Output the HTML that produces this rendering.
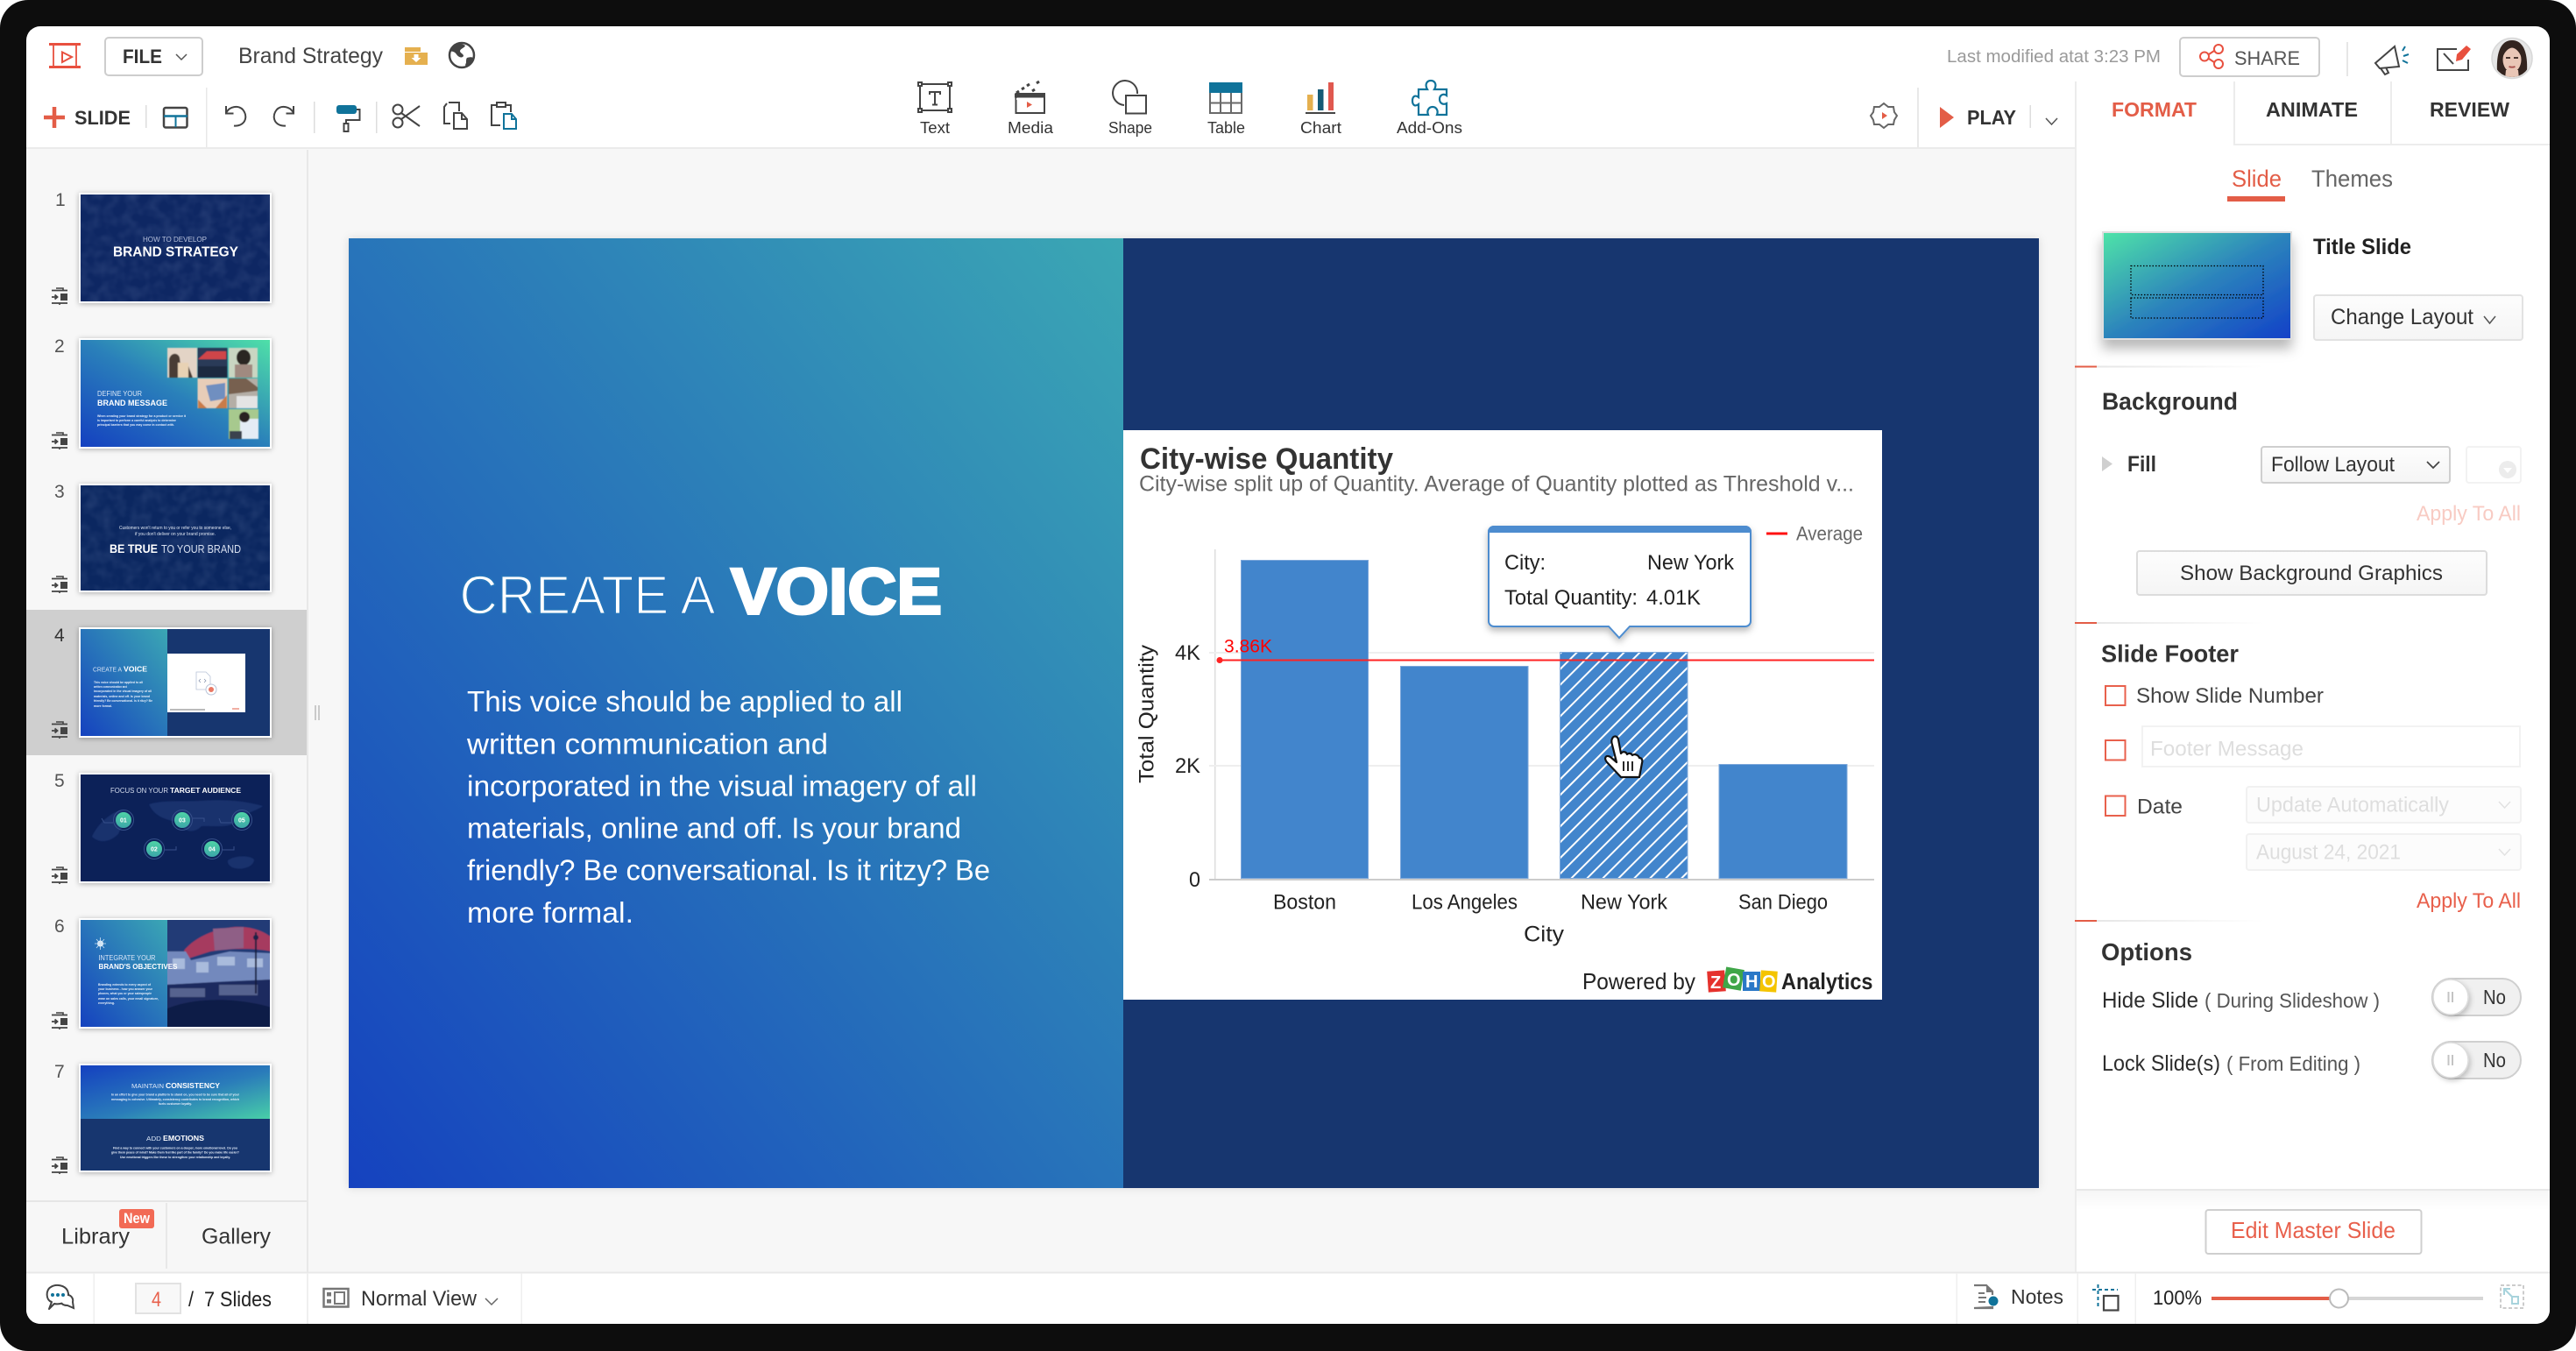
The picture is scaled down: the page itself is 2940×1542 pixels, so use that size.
<!DOCTYPE html>
<html lang="en">
<head>
<meta charset="utf-8">
<title>Brand Strategy</title>
<style>
html,body{margin:0;padding:0;background:#fff;width:2940px;height:1542px;overflow:hidden}
svg{display:block}
text{font-family:"Liberation Sans",Arial,sans-serif;fill:#333}
.b{font-weight:700}
</style>
</head>
<body>
<svg xmlns="http://www.w3.org/2000/svg" width="2940" height="1542" viewBox="0 0 2940 1542">
<defs>
<clipPath id="app"><rect x="30" y="30" width="2880" height="1481" rx="16"/></clipPath>
<linearGradient id="gMain" x1="0" y1="1" x2="1" y2="0"><stop offset="0" stop-color="#1542bf"/><stop offset="1" stop-color="#3ba7b4"/></linearGradient>
<linearGradient id="gGreen" x1="0" y1="1" x2="1" y2="0"><stop offset="0" stop-color="#1440c0"/><stop offset=".5" stop-color="#2a80ba"/><stop offset="1" stop-color="#4fe0a8"/></linearGradient>
<linearGradient id="gLayout" x1="0" y1="0" x2="1" y2="1"><stop offset="0" stop-color="#4fe4a8"/><stop offset=".5" stop-color="#2c84bc"/><stop offset="1" stop-color="#1240c8"/></linearGradient>
<linearGradient id="gTop7" x1="0" y1="0" x2="1" y2="1"><stop offset="0" stop-color="#1440c0"/><stop offset=".55" stop-color="#2a7cba"/><stop offset="1" stop-color="#48cfa8"/></linearGradient>
<linearGradient id="gCircle" x1="0" y1="0" x2="0" y2="1"><stop offset="0" stop-color="#4fd3a6"/><stop offset="1" stop-color="#3ca6a8"/></linearGradient>
<linearGradient id="gFade"><stop offset="0" stop-color="#e6e6e6"/><stop offset="1" stop-color="#fff"/></linearGradient>
<linearGradient id="gBtn" x1="0" y1="0" x2="0" y2="1"><stop offset="0" stop-color="#fdfdfd"/><stop offset="1" stop-color="#f5f5f5"/></linearGradient>
<linearGradient id="gPanelB" x1="0" y1="0" x2="0" y2="1"><stop offset="0" stop-color="#f6f6f6"/><stop offset="1" stop-color="#fff"/></linearGradient>
<pattern id="hatch" patternUnits="userSpaceOnUse" width="12.700" height="12.700" patternTransform="translate(1781 744) rotate(45)">
<rect width="12.700" height="12.700" fill="#4285cc"/><rect x="0" y="0" width="2" height="12.700" fill="#fff"/>
</pattern>
<filter id="sSoft" x="-10%" y="-10%" width="120%" height="120%"><feDropShadow dx="0" dy="0" stdDeviation="5" flood-color="#000" flood-opacity=".12"/></filter>
<filter id="sThumb" x="-10%" y="-10%" width="120%" height="120%"><feDropShadow dx="0" dy="1" stdDeviation="3" flood-color="#000" flood-opacity=".3"/></filter>
<filter id="sLayout" x="-15%" y="-15%" width="130%" height="140%"><feDropShadow dx="0" dy="10" stdDeviation="7" flood-color="#000" flood-opacity=".28"/></filter>
<filter id="sTip" x="-10%" y="-10%" width="120%" height="130%"><feDropShadow dx="0" dy="4" stdDeviation="4" flood-color="#000" flood-opacity=".28"/></filter>
<filter id="sKnob" x="-30%" y="-30%" width="160%" height="170%"><feDropShadow dx="2" dy="3" stdDeviation="3" flood-color="#000" flood-opacity=".2"/></filter>
<filter id="tex" x="0" y="0" width="100%" height="100%"><feTurbulence type="fractalNoise" baseFrequency=".07" numOctaves="2" seed="4"/><feColorMatrix values="0 0 0 0 .5  0 0 0 0 .6  0 0 0 0 .85  0 0 0 .22 -.08"/></filter>
<filter id="bl" x="-2%" y="-2%" width="104%" height="104%"><feGaussianBlur stdDeviation=".5"/></filter>
<g id="trans" fill="none" stroke="#444" stroke-width="1.8">
<path d="M1 2.500H19M1 17H19" stroke-width="1.8"/>
<path d="M6 0h8v2.500M10 17v2" stroke-width="1.6"/>
<path d="M1 10H7M4.500 7.500L7.500 10L4.500 12.500" stroke-width="1.8"/>
<rect x="11" y="6" width="8" height="8" fill="#444" stroke="none"/>
</g>
<g id="sw"><rect width="101" height="42" rx="21" fill="#f0f0f0" stroke="#cfcfcf" stroke-width="2"/><circle cx="21" cy="21" r="20" fill="#fff" stroke="#dcdcdc" stroke-width="1.500" filter="url(#sKnob)"/><path d="M18.500 15v12M23 15v12" stroke="#c4c4c4" stroke-width="2"/></g>
</defs>

<rect width="2940" height="1542" rx="32" fill="#0d0d0d"/>
<g clip-path="url(#app)">
<rect x="30" y="30" width="2880" height="1481" fill="#fff"/>

<!-- canvas and sidebar -->
<rect x="30" y="170" width="2340" height="1283" fill="#f7f7f7"/>
<rect x="30" y="696" width="320" height="166" fill="#cfcfcf"/>
<rect x="350" y="171" width="2" height="1282" fill="#e8e8e8"/>
<rect x="30" y="168" width="2340" height="2" fill="#ebebeb"/>
<rect x="30" y="1370" width="320" height="2" fill="#e6e6e6"/>
<rect x="189" y="1373" width="2" height="75" fill="#e8e8e8"/>
<path d="M360 805v17M364 805v17" stroke="#bbb" stroke-width="1.500"/>

<!-- header row 1 -->
<g fill="none" stroke="#e8503f">
<path d="M56 50.500H92M56 76.500H92" stroke-width="3"/>
<path d="M61 52V75M87 52V75" stroke-width="1.800"/>
<path d="M71 59.500L82 65L71 71Z" stroke-width="2"/>
</g>
<rect x="120" y="43" width="111" height="43" rx="4" fill="#fff" stroke="#cdcdcd" stroke-width="2"/>
<text x="140" y="72" font-size="22" class="b" textLength="45" lengthAdjust="spacingAndGlyphs">FILE</text>
<path d="M201 62l6 6l6-6" fill="none" stroke="#555" stroke-width="1.500"/>
<text x="272" y="72" font-size="25" style="fill:#444" textLength="165" lengthAdjust="spacingAndGlyphs">Brand Strategy</text>
<path d="M462 54h18v5h-18zM462 60h26v14h-26z" fill="#e5b04f"/>
<path d="M472.500 62h5v4h3l-5.500 5l-5.500-5h3z" fill="#fff"/>
<circle cx="527" cy="63" r="14" fill="#fff" stroke="#444" stroke-width="2.500"/>
<path d="M520 50c4-1 8 0 11 2c-1 3-5 3-6 6c0 3 4 3 4 6c-2 3-6 1-8-2c-2-3-5-4-8-3c1-4 3-7 7-9zM533 66c3-1 6-1 7 0c-1 4-4 8-8 10c-2-2 0-3 0-5c0-2 0-4 1-5z" fill="#444"/>

<text x="2222" y="71" font-size="20.500" style="fill:#9a9a9a" textLength="244" lengthAdjust="spacingAndGlyphs">Last modified atat 3:23 PM</text>
<rect x="2488" y="43" width="159" height="44" rx="4" fill="#fff" stroke="#cdcdcd" stroke-width="2"/>
<g fill="none" stroke="#e8503f" stroke-width="2"><circle cx="2516" cy="64.500" r="5"/><circle cx="2532" cy="56" r="5"/><circle cx="2532" cy="73" r="5"/><path d="M2521 62l6-4M2521 67l6 4"/></g>
<text x="2550" y="74" font-size="22" style="fill:#555" textLength="75" lengthAdjust="spacingAndGlyphs">SHARE</text>
<rect x="2678" y="48" width="2" height="39" fill="#e6e6e6"/>
<g fill="none" stroke="#444" stroke-width="2"><path d="M2733 53L2711 72L2716 78L2738 76Z"/><path d="M2717 78l5 7l4-2l-3-6"/></g>
<path d="M2742 58l3-5M2743 64l6-2M2742 69l6 3" stroke="#10739a" stroke-width="2" fill="none"/>
<path d="M2804 56H2782V80H2817V68" fill="none" stroke="#444" stroke-width="2"/>
<path d="M2789 61L2800 73" stroke="#444" stroke-width="2"/>
<path d="M2803 70L2804 62L2815 52L2820 56L2810 68Z" fill="#e8503f"/>
<circle cx="2867" cy="66.500" r="23" fill="#e6e6e6" stroke="#d8d8d8" stroke-width="1.500"/>
<clipPath id="av"><circle cx="2867" cy="66.500" r="21.500"/></clipPath>
<g clip-path="url(#av)">
<path d="M2851 92C2848 70 2850 46 2867 46C2884 46 2886 70 2883 92Z" fill="#33241f"/>
<ellipse cx="2867" cy="68" rx="10.500" ry="14.500" fill="#e9c6b6"/>
<path d="M2856 66C2857 54 2863 51 2867 53C2871 51 2877 54 2878 66C2875 58 2871 55 2867 54.500C2863 55 2859 58 2856 66Z" fill="#33241f"/>
<path d="M2860 66h5M2869 66h5" stroke="#33221c" stroke-width="1.800"/>
<path d="M2863.500 76c2.500 1 4.500 1 7 0" stroke="#a8504c" stroke-width="1.800" fill="none"/>
<path d="M2860 80l14 0l1 10h-16z" fill="#e9c6b6"/>
</g>

<!-- row 2 left -->
<path d="M50 134H74M62 122V146" stroke="#e35d47" stroke-width="4.500" fill="none"/>
<text x="85" y="142" font-size="22" class="b" textLength="64" lengthAdjust="spacingAndGlyphs">SLIDE</text>
<rect x="166" y="120" width="1.500" height="26" fill="#ddd"/>
<rect x="187" y="123" width="26.500" height="22.500" rx="2" fill="none" stroke="#444" stroke-width="2.500"/>
<path d="M187 132.500H214" stroke="#10739a" stroke-width="2.500"/><path d="M200.500 133V145" stroke="#10739a" stroke-width="2"/>
<rect x="235" y="100" width="1.500" height="68" fill="#e8e8e8"/>
<g fill="none" stroke="#444" stroke-width="2">
<path d="M258 121v8.500h8.500"/><path d="M258 129C262 121 272 120 277 125C282 131 281 138 276 141.500C274 143 270 144 267 143.500"/>
<path d="M335 121v8.500h-8.500"/><path d="M335 129C331 121 321 120 316 125C311 131 312 138 317 141.500C319 143 323 144 326 143.500"/>
</g>
<rect x="358" y="116" width="1.500" height="36" fill="#ddd"/>
<rect x="384" y="120" width="23" height="10" rx="3" fill="#10739a"/>
<path d="M407 125H410.500V137H395V141" fill="none" stroke="#444" stroke-width="2"/><rect x="392.500" y="141" width="5" height="9" fill="#fff" stroke="#444" stroke-width="2"/>
<rect x="429" y="116" width="1.500" height="36" fill="#ddd"/>
<g fill="none" stroke="#444" stroke-width="2"><circle cx="454" cy="125" r="5.500"/><circle cx="454" cy="140" r="5.500"/><path d="M458 129L479 144M458 136L479 121"/></g>
<g fill="none" stroke="#444" stroke-width="2"><path d="M512 117h12v10M510 118l-3 4v19h7"/><path d="M518 129h9l6 7v11h-15z" fill="#fff"/><path d="M527 129v7h6"/></g>
<g fill="none" stroke="#444" stroke-width="2"><path d="M571 143h-10v-23h6M577 120h6v8"/><rect x="567" y="117" width="10" height="5"/></g>
<path d="M575 130h9l5 6v11h-14zM584 130v6h5" fill="#fff" stroke="#10739a" stroke-width="2"/>

<!-- insert icons -->
<g fill="none" stroke="#444" stroke-width="2">
<rect x="1050" y="96" width="34" height="30"/>
<rect x="1048" y="94" width="4" height="4" fill="#fff"/><rect x="1082" y="94" width="4" height="4" fill="#fff"/><rect x="1048" y="124" width="4" height="4" fill="#fff"/><rect x="1082" y="124" width="4" height="4" fill="#fff"/>
<path d="M1061 108v-3h12v3M1067 105v14M1064 119.500h6"/>
<rect x="1159.500" y="107" width="32.500" height="22"/>
<path d="M1298 107A14 14 0 1 0 1283 120"/>
<rect x="1285" y="109" width="23" height="20.500"/>
</g>
<path d="M1158 107h35v4.500h-35z" fill="#444"/>
<path d="M1160 106l3-2M1166 102l3-2M1172 98l3-2M1178 104l3-2M1183 95l3-2" stroke="#444" stroke-width="3" fill="none"/>
<path d="M1160 113h3M1166 113h3M1172 113h3M1178 113h3M1184 113h3" stroke="#fff" stroke-width="2"/>
<path d="M1172 116l6 3.500l-6 3.500z" fill="#e35d47"/>
<rect x="1380" y="94" width="38" height="12" fill="#10739a"/>
<path d="M1381 106V129H1417V106M1393 106V129M1405 106V129M1381 117.500H1417" fill="none" stroke="#6a6a6a" stroke-width="2"/>
<rect x="1492" y="108" width="6.500" height="18" fill="#e5b04f"/><rect x="1504" y="102" width="6.500" height="24" fill="#155a75"/><rect x="1516" y="94" width="6" height="32" fill="#e0584f"/><rect x="1490" y="128" width="34" height="2" fill="#444"/>
<path d="M1619 131V119C1615 122 1612 120 1612 115C1612 110 1615 108 1619 111V102H1629C1626 97 1628 92 1633 92C1638 92 1640 97 1637 102H1651V109C1647 106 1643 109 1643 113C1643 118 1647 120 1651 118V131H1640C1642 126 1639 122 1635 122C1631 122 1628 126 1630 131Z" fill="none" stroke="#10739a" stroke-width="2.200"/>
<g font-size="18.500">
<text x="1050" y="152" textLength="34" lengthAdjust="spacingAndGlyphs">Text</text>
<text x="1150" y="152" textLength="52" lengthAdjust="spacingAndGlyphs">Media</text>
<text x="1265" y="152" textLength="50" lengthAdjust="spacingAndGlyphs">Shape</text>
<text x="1378" y="152" textLength="43" lengthAdjust="spacingAndGlyphs">Table</text>
<text x="1484" y="152" textLength="47" lengthAdjust="spacingAndGlyphs">Chart</text>
<text x="1594" y="152" textLength="75" lengthAdjust="spacingAndGlyphs">Add-Ons</text>
</g>

<!-- play area -->
<path d="M2150 118l5 4h6l1 6l3 4l-3 5l-1 5h-6l-5 4l-5-4h-6l-1-5l-3-5l3-4l1-6h6z" fill="none" stroke="#666" stroke-width="2"/>
<path d="M2148 128l6 4l-6 4z" fill="#e35d47"/>
<rect x="2188" y="100" width="2" height="68" fill="#e8e8e8"/>
<path d="M2214 122L2230 134L2214 146Z" fill="#e35d47"/>
<text x="2245" y="142" font-size="23" class="b" textLength="56" lengthAdjust="spacingAndGlyphs">PLAY</text>
<rect x="2316.500" y="120" width="1.500" height="26" fill="#ddd"/>
<path d="M2335 135l6.500 7l6.500-7" fill="none" stroke="#555" stroke-width="1.500"/>

<!-- right panel -->
<rect x="2368" y="93" width="2" height="1360" fill="#ececec"/>
<rect x="2549" y="93" width="2" height="72" fill="#ececec"/>
<rect x="2728" y="93" width="2" height="72" fill="#ececec"/>
<rect x="2549" y="164" width="361" height="2" fill="#ececec"/>
<rect x="2370" y="166" width="540" height="1287" fill="#fff"/>
<rect x="2370" y="93" width="179" height="80" fill="#fff"/>
<g font-size="23" class="b">
<text x="2410" y="133" style="fill:#e35d47" textLength="97" lengthAdjust="spacingAndGlyphs">FORMAT</text>
<text x="2586" y="133" textLength="105" lengthAdjust="spacingAndGlyphs">ANIMATE</text>
<text x="2773" y="133" textLength="91" lengthAdjust="spacingAndGlyphs">REVIEW</text>
</g>
<text x="2547" y="213" font-size="27" style="fill:#e35d47" textLength="57" lengthAdjust="spacingAndGlyphs">Slide</text>
<rect x="2542" y="224" width="66" height="6" fill="#e35d47"/>
<text x="2638" y="213" font-size="27" style="fill:#666" textLength="93" lengthAdjust="spacingAndGlyphs">Themes</text>
<rect x="2400" y="265" width="215" height="122" fill="url(#gLayout)" stroke="#dfdfdf" stroke-width="2" filter="url(#sLayout)"/>
<g fill="none" stroke="#000" stroke-width="1.300" stroke-dasharray="1.500 2"><rect x="2432" y="303.500" width="151" height="33"/><rect x="2432" y="340" width="151" height="23"/></g>
<text x="2640" y="290" font-size="25" class="b" style="fill:#222" textLength="112" lengthAdjust="spacingAndGlyphs">Title Slide</text>
<rect x="2641" y="337" width="238" height="51" rx="3" fill="url(#gBtn)" stroke="#e2e2e2" stroke-width="2"/>
<text x="2660" y="370" font-size="25" textLength="163" lengthAdjust="spacingAndGlyphs">Change Layout</text>
<path d="M2835 361l6.500 8l6.500-8" fill="none" stroke="#555" stroke-width="1.500"/>

<g>
<rect x="2393" y="417.500" width="190" height="2" fill="url(#gFade)"/><rect x="2368" y="417.500" width="25" height="2" fill="#e35d47"/>
<rect x="2393" y="710" width="190" height="2" fill="url(#gFade)"/><rect x="2368" y="710" width="25" height="2" fill="#e35d47"/>
<rect x="2393" y="1050" width="190" height="2" fill="url(#gFade)"/><rect x="2368" y="1050" width="25" height="2" fill="#e35d47"/>
</g>

<text x="2399" y="467.500" font-size="28" class="b" textLength="155" lengthAdjust="spacingAndGlyphs">Background</text>
<path d="M2399 521L2411 529.500L2399 538Z" fill="#cfcfcf"/>
<text x="2428" y="538" font-size="25" class="b" textLength="33" lengthAdjust="spacingAndGlyphs">Fill</text>
<rect x="2581" y="510" width="215" height="41" rx="3" fill="url(#gBtn)" stroke="#cfcfcf" stroke-width="2"/>
<text x="2592" y="538" font-size="24" textLength="141" lengthAdjust="spacingAndGlyphs">Follow Layout</text>
<path d="M2770 527l7 7l7-7" fill="none" stroke="#444" stroke-width="1.700"/>
<rect x="2815" y="510" width="62" height="41" rx="3" fill="#fff" stroke="#f2f2f2" stroke-width="2"/>
<circle cx="2862" cy="536" r="10" fill="#ececec"/><path d="M2857 534h10l-5 6z" fill="#fff"/>
<text x="2758" y="594" font-size="24" style="fill:#f8cbc3" textLength="119" lengthAdjust="spacingAndGlyphs">Apply To All</text>
<rect x="2439" y="629" width="399" height="50" rx="3" fill="url(#gBtn)" stroke="#dcdcdc" stroke-width="2"/>
<text x="2488" y="662" font-size="24.500" textLength="300" lengthAdjust="spacingAndGlyphs">Show Background Graphics</text>

<text x="2398" y="755.500" font-size="28" class="b" textLength="157" lengthAdjust="spacingAndGlyphs">Slide Footer</text>
<g fill="#fff" stroke="#e8604c" stroke-width="2"><rect x="2403" y="783" width="22.500" height="22"/><rect x="2403" y="845" width="22.500" height="22.500"/><rect x="2403" y="908.500" width="22.500" height="22.500"/></g>
<text x="2438" y="802" font-size="24.500" style="fill:#444" textLength="214" lengthAdjust="spacingAndGlyphs">Show Slide Number</text>
<rect x="2445" y="829" width="431" height="46" fill="#fff" stroke="#f2f2f2" stroke-width="2"/>
<text x="2454" y="862.500" font-size="24.500" style="fill:#dedede" textLength="175" lengthAdjust="spacingAndGlyphs">Footer Message</text>
<text x="2439" y="928.500" font-size="24.500" style="fill:#444" textLength="52" lengthAdjust="spacingAndGlyphs">Date</text>
<rect x="2564" y="898" width="313" height="41" rx="3" fill="#fcfcfc" stroke="#f1f1f1" stroke-width="2"/>
<text x="2575" y="926.500" font-size="24" style="fill:#dedede" textLength="220" lengthAdjust="spacingAndGlyphs">Update Automatically</text>
<path d="M2852 915l6.500 7l6.500-7" fill="none" stroke="#e2e2e2" stroke-width="1.500"/>
<rect x="2564" y="952" width="313" height="41" rx="3" fill="#fcfcfc" stroke="#f1f1f1" stroke-width="2"/>
<text x="2575" y="980.500" font-size="24" style="fill:#dedede" textLength="165" lengthAdjust="spacingAndGlyphs">August 24, 2021</text>
<path d="M2852 969l6.500 7l6.500-7" fill="none" stroke="#e2e2e2" stroke-width="1.500"/>
<text x="2758" y="1036" font-size="24" style="fill:#e8604c" textLength="119" lengthAdjust="spacingAndGlyphs">Apply To All</text>

<text x="2398" y="1096" font-size="28" class="b" textLength="104" lengthAdjust="spacingAndGlyphs">Options</text>
<text x="2399" y="1150" font-size="25" style="fill:#2d2d2d" textLength="110" lengthAdjust="spacingAndGlyphs">Hide Slide</text>
<text x="2516" y="1150" font-size="23" style="fill:#555" textLength="200" lengthAdjust="spacingAndGlyphs">( During Slideshow )</text>
<use href="#sw" x="2776" y="1117"/>
<text x="2834" y="1146" font-size="23" textLength="26" lengthAdjust="spacingAndGlyphs">No</text>
<text x="2399" y="1222" font-size="25" style="fill:#2d2d2d" textLength="135" lengthAdjust="spacingAndGlyphs">Lock Slide(s)</text>
<text x="2541" y="1222" font-size="23" style="fill:#555" textLength="153" lengthAdjust="spacingAndGlyphs">( From Editing )</text>
<use href="#sw" x="2776" y="1189"/>
<text x="2834" y="1218" font-size="23" textLength="26" lengthAdjust="spacingAndGlyphs">No</text>

<rect x="2370" y="1357" width="540" height="2" fill="#e8e8e8"/>
<rect x="2370" y="1359" width="540" height="22" fill="url(#gPanelB)"/>
<rect x="2517.500" y="1381" width="246" height="50" rx="3" fill="#fff" stroke="#cfcfcf" stroke-width="2"/>
<text x="2546" y="1413" font-size="26" style="fill:#e8604c" textLength="188" lengthAdjust="spacingAndGlyphs">Edit Master Slide</text>

<!-- status bar -->
<rect x="30" y="1453" width="2880" height="60" fill="#fff"/>
<rect x="30" y="1451.500" width="2880" height="2" fill="#e8e8e8"/>
<g fill="#efefef"><rect x="106.500" y="1453" width="1.500" height="58"/><rect x="350" y="1453" width="2" height="58"/><rect x="594.500" y="1453" width="1.500" height="58"/><rect x="2232.500" y="1453" width="1.500" height="58"/><rect x="2370.500" y="1453" width="1.500" height="58"/><rect x="2436.500" y="1453" width="1.500" height="58"/></g>
<path d="M56 1494l3-8C52 1484 52 1472 58 1469C64 1465 74 1467 77 1473C79 1478 78 1482 75 1485C72 1488 66 1489 62 1488Z" fill="#fff" stroke="#444" stroke-width="2" stroke-linejoin="round"/>
<path d="M77 1478C81 1478 84 1482 83 1486L84 1493L77 1490C74 1490 71 1489 70 1487" fill="#fff" stroke="#444" stroke-width="2"/>
<circle cx="60" cy="1478" r="2" fill="#10739a"/><circle cx="66" cy="1478" r="2" fill="#10739a"/><circle cx="72" cy="1478" r="2" fill="#10739a"/>
<rect x="155" y="1465" width="51" height="34" fill="#f8f8f8" stroke="#e2e2e2" stroke-width="2"/>
<text x="173" y="1491" font-size="24" style="fill:#e8604c" textLength="11" lengthAdjust="spacingAndGlyphs">4</text>
<text x="215" y="1491" font-size="24" style="fill:#222" textLength="6" lengthAdjust="spacingAndGlyphs">/</text>
<text x="233" y="1491" font-size="24" style="fill:#222" textLength="77" lengthAdjust="spacingAndGlyphs">7 Slides</text>
<rect x="369.500" y="1471" width="28" height="20.500" fill="#fff" stroke="#777" stroke-width="2.500"/>
<rect x="382" y="1475" width="11" height="13" fill="none" stroke="#777" stroke-width="2"/>
<rect x="373" y="1475" width="5" height="4.500" fill="#777"/><rect x="373" y="1483" width="5" height="4.500" fill="#777"/>
<text x="412" y="1490" font-size="24" textLength="132" lengthAdjust="spacingAndGlyphs">Normal View</text>
<path d="M554 1482l7 7l7-7" fill="none" stroke="#666" stroke-width="1.500"/>
<path d="M2253 1467H2267L2274 1474V1478M2274 1492V1493H2253Z" fill="none" stroke="#777" stroke-width="2.200"/>
<path d="M2267 1467L2275 1475H2267Z" fill="#777"/>
<path d="M2258 1476h7M2258 1481h9M2258 1486h8" stroke="#777" stroke-width="2"/>
<circle cx="2275" cy="1485" r="5.500" fill="#10739a"/>
<text x="2295" y="1488" font-size="23" textLength="60" lengthAdjust="spacingAndGlyphs">Notes</text>
<path d="M2388 1472H2417M2394.500 1466V1492" stroke="#10739a" stroke-width="2" stroke-dasharray="4 3" fill="none"/>
<rect x="2401" y="1479" width="16.500" height="16.500" fill="#fff" stroke="#444" stroke-width="2.200"/>
<text x="2457" y="1489" font-size="23" style="fill:#222" textLength="56" lengthAdjust="spacingAndGlyphs">100%</text>
<rect x="2660" y="1480" width="174" height="4" fill="#d6d6d6"/>
<rect x="2524" y="1480" width="136" height="4" fill="#e35d47"/>
<circle cx="2669.500" cy="1482" r="10.500" fill="#fff" stroke="#bbb" stroke-width="2"/>
<rect x="2854" y="1467" width="26" height="26" fill="#fff" stroke="#ccc" stroke-width="2" stroke-dasharray="4 2.500"/>
<path d="M2858 1471l10 10M2858 1478v-7h7" fill="none" stroke="#a8d3dc" stroke-width="2"/>
<rect x="2867" y="1480" width="7" height="8" fill="#fff" stroke="#a8d3dc" stroke-width="2"/>

<!-- sidebar footer -->
<text x="70" y="1419.500" font-size="25" textLength="78" lengthAdjust="spacingAndGlyphs">Library</text>
<text x="230" y="1419.500" font-size="25" textLength="79" lengthAdjust="spacingAndGlyphs">Gallery</text>
<rect x="136" y="1380" width="40" height="22" rx="3" fill="#f26a55"/>
<text x="141" y="1396" font-size="16.500" class="b" style="fill:#fff" textLength="30" lengthAdjust="spacingAndGlyphs">New</text>

<!-- main slide -->
<rect x="398" y="272" width="1929" height="1084" fill="#17366f" filter="url(#sSoft)"/>
<rect x="398" y="272" width="884" height="1084" fill="url(#gMain)"/>
<rect x="1282" y="272" width="1045" height="1084" fill="#17366f"/>
<text x="524.500" y="700.500" font-size="62" style="fill:#fff;stroke:#2775bb;stroke-width:1.700" textLength="292" lengthAdjust="spacingAndGlyphs">CREATE A</text>
<text x="834" y="700.500" font-size="74" class="b" style="fill:#fff;stroke:#fff;stroke-width:3" textLength="241" lengthAdjust="spacingAndGlyphs">VOICE</text>
<g font-size="33">
<text x="533" y="812" style="fill:#fff" textLength="497" lengthAdjust="spacingAndGlyphs">This voice should be applied to all</text>
<text x="533" y="860.500" style="fill:#fff" textLength="412" lengthAdjust="spacingAndGlyphs">written communication and</text>
<text x="533" y="908.500" style="fill:#fff" textLength="582" lengthAdjust="spacingAndGlyphs">incorporated in the visual imagery of all</text>
<text x="533" y="956.500" style="fill:#fff" textLength="564" lengthAdjust="spacingAndGlyphs">materials, online and off. Is your brand</text>
<text x="533" y="1004.500" style="fill:#fff" textLength="597" lengthAdjust="spacingAndGlyphs">friendly? Be conversational. Is it ritzy? Be</text>
<text x="533" y="1053" style="fill:#fff" textLength="190" lengthAdjust="spacingAndGlyphs">more formal.</text>
</g>

<!-- chart -->
<rect x="1282" y="491" width="866" height="650" fill="#fff"/>
<text x="1301" y="535" font-size="34" class="b" textLength="289" lengthAdjust="spacingAndGlyphs">City-wise Quantity</text>
<text x="1300" y="560.500" font-size="25" style="fill:#666" textLength="816" lengthAdjust="spacingAndGlyphs">City-wise split up of Quantity. Average of Quantity plotted as Threshold v...</text>
<rect x="1386" y="627" width="1.500" height="377" fill="#ddd"/>
<path d="M1380 745H2139M1380 874H2139" stroke="#eee" stroke-width="2"/>
<rect x="1380" y="1003" width="759" height="2" fill="#ccc"/>
<g stroke="#7ba6da" stroke-width="1">
<rect x="1416.500" y="639.500" width="145" height="363" fill="#4285cc"/>
<rect x="1598.500" y="760.500" width="145.500" height="242" fill="#4285cc"/>
<rect x="1780.500" y="744.500" width="145.500" height="258" fill="url(#hatch)"/>
<rect x="1962" y="872.500" width="146" height="130" fill="#4285cc"/>
</g>
<rect x="1392" y="752.500" width="747" height="2" fill="#f22"/>
<circle cx="1392" cy="753.500" r="3.500" fill="#f22"/>
<text x="1397" y="744.500" font-size="21" style="fill:#f00" textLength="55" lengthAdjust="spacingAndGlyphs">3.86K</text>
<g font-size="24">
<text x="1341" y="753" style="fill:#222" textLength="29" lengthAdjust="spacingAndGlyphs">4K</text>
<text x="1341" y="882" style="fill:#222" textLength="29" lengthAdjust="spacingAndGlyphs">2K</text>
<text x="1357" y="1012" style="fill:#222" textLength="13" lengthAdjust="spacingAndGlyphs">0</text>
<text x="1453" y="1037.500" style="fill:#222" textLength="72" lengthAdjust="spacingAndGlyphs">Boston</text>
<text x="1611" y="1037.500" style="fill:#222" textLength="121" lengthAdjust="spacingAndGlyphs">Los Angeles</text>
<text x="1804" y="1037.500" style="fill:#222" textLength="99" lengthAdjust="spacingAndGlyphs">New York</text>
<text x="1984" y="1037.500" style="fill:#222" textLength="102" lengthAdjust="spacingAndGlyphs">San Diego</text>
</g>
<text x="1739" y="1074.500" font-size="25" style="fill:#222" textLength="46" lengthAdjust="spacingAndGlyphs">City</text>
<text transform="translate(1316.500,894) rotate(-90)" font-size="24" style="fill:#222" textLength="158" lengthAdjust="spacingAndGlyphs">Total Quantity</text>
<rect x="2016" y="607.500" width="24" height="3" fill="#f11"/>
<text x="2050" y="616.500" font-size="22" style="fill:#666" textLength="76" lengthAdjust="spacingAndGlyphs">Average</text>
<path d="M1705 601H1992a6 6 0 0 1 6 6V709a6 6 0 0 1-6 6H1860L1848 728L1836 715H1705a6 6 0 0 1-6-6V607a6 6 0 0 1 6-6Z" fill="#fff" stroke="#4d8ccf" stroke-width="2" filter="url(#sTip)"/>
<path d="M1698 608V607a7 7 0 0 1 7-7H1992a7 7 0 0 1 7 7V608Z" fill="#4d8ccf"/>
<g font-size="24">
<text x="1717" y="650" style="fill:#222" textLength="47" lengthAdjust="spacingAndGlyphs">City:</text>
<text x="1880" y="650" style="fill:#222" textLength="99" lengthAdjust="spacingAndGlyphs">New York</text>
<text x="1717" y="690" style="fill:#222" textLength="152" lengthAdjust="spacingAndGlyphs">Total Quantity:</text>
<text x="1879" y="690" style="fill:#222" textLength="62" lengthAdjust="spacingAndGlyphs">4.01K</text>
</g>
<path d="M1840 843C1842 839 1846 840 1847 844L1850 860C1852 857 1856 858 1857 861C1859 859 1862 860 1863 862C1866 860 1870 862 1871 865C1874 865 1875 868 1874 871L1871 887H1850L1834 870C1830 865 1833 861 1838 864L1845 870L1840 850C1839 847 1839 845 1840 843Z" fill="#fff" stroke="#111" stroke-width="2.200" stroke-linejoin="round"/>
<path d="M1853 869V880M1858 869V880M1863 869V880" stroke="#111" stroke-width="1.800"/>
<text x="1806" y="1129" font-size="26" style="fill:#222" textLength="129" lengthAdjust="spacingAndGlyphs">Powered by</text>
<g>
<rect x="1949" y="1108" width="20" height="24" fill="#e5322d" transform="rotate(-4 1959 1120)"/>
<rect x="1968" y="1105" width="21" height="24" fill="#3fa648" transform="rotate(10 1978 1117)"/>
<rect x="1989" y="1109" width="20" height="22" fill="#2a78c7"/>
<rect x="2009" y="1108" width="19" height="24" fill="#f4c400" transform="rotate(4 2018 1120)"/>
<g font-size="20" class="b">
<text x="1952" y="1128" style="fill:#fff">Z</text>
<text x="1971" y="1125" style="fill:#fff">O</text>
<text x="1992" y="1127" style="fill:#fff">H</text>
<text x="2011" y="1127" style="fill:#fff">O</text>
</g>
</g>
<text x="2033" y="1129" font-size="26" class="b" style="fill:#222" textLength="104.500" lengthAdjust="spacingAndGlyphs">Analytics</text>

<!-- thumbs -->
<g font-size="21">
<text x="63" y="235" style="fill:#555">1</text>
<text x="62" y="402" style="fill:#555">2</text>
<text x="62" y="568" style="fill:#555">3</text>
<text x="62" y="732" style="fill:#333">4</text>
<text x="62" y="898" style="fill:#555">5</text>
<text x="62" y="1064" style="fill:#555">6</text>
<text x="62" y="1230" style="fill:#555">7</text>
</g>
<use href="#trans" x="58" y="329"/><use href="#trans" x="58" y="494"/><use href="#trans" x="58" y="658"/><use href="#trans" x="58" y="824"/><use href="#trans" x="58" y="990"/><use href="#trans" x="58" y="1156"/><use href="#trans" x="58" y="1321"/>
<g fill="#fff" filter="url(#sThumb)">
<rect x="90" y="220" width="220" height="126"/><rect x="90" y="386" width="220" height="126"/><rect x="90" y="552" width="220" height="124"/><rect x="90" y="716" width="220" height="126"/><rect x="90" y="882" width="220" height="126"/><rect x="90" y="1048" width="220" height="126"/><rect x="90" y="1214" width="220" height="124"/>
</g>

<!-- thumb1 -->
<rect x="92" y="222" width="216" height="122" fill="#0e2763"/>
<rect x="92" y="222" width="216" height="122" filter="url(#tex)"/>
<text x="163" y="276" font-size="8.500" style="fill:#b8c2dc" textLength="73" lengthAdjust="spacingAndGlyphs">HOW TO DEVELOP</text>
<text x="129" y="292.500" font-size="15.500" class="b" style="fill:#fff" textLength="143" lengthAdjust="spacingAndGlyphs">BRAND STRATEGY</text>

<!-- thumb2 -->
<rect x="92" y="388" width="216" height="122" fill="url(#gGreen)"/>
<g filter="url(#bl)">
<rect x="191" y="397" width="34" height="34" fill="#e3d4c6"/><path d="M193 431V410c2-8 10-8 12-2l1 8l9 2l5 13z" fill="#4a3d36"/><rect x="203" y="414" width="12" height="17" fill="#e8d2b4"/>
<rect x="225.500" y="397" width="34" height="34" fill="#2c3b58"/><path d="M226 410l10-9h22v9z" fill="#cf4448"/><rect x="226" y="418" width="33" height="13" fill="#1f2a40"/>
<rect x="261" y="397" width="33" height="34" fill="#c9d6c2"/><ellipse cx="278" cy="408" rx="8" ry="9" fill="#2b2523"/><rect x="268" y="416" width="20" height="15" fill="#a08a80"/>
<rect x="225.500" y="432" width="34" height="34" fill="#e7cdb8"/><path d="M235 440l22-3v18l-17 3z" fill="#6f8fc0"/><path d="M226 456l10 10h-10zM246 466l13-15v15z" fill="#c97b4a"/>
<rect x="261" y="432" width="33" height="34" fill="#b4aea6"/><path d="M261 432h20l13 10v4l-33 4z" fill="#77604f"/><rect x="270" y="452" width="24" height="14" fill="#e4e4e4"/>
<rect x="261" y="467" width="34" height="34" fill="#a7c98e"/><rect x="274" y="478" width="21" height="23" fill="#e4ecf5"/><circle cx="279" cy="476" r="6" fill="#2a2320"/><rect x="262" y="492" width="14" height="9" fill="#3a424e"/>
</g>
<text x="111" y="452" font-size="8.500" style="fill:#dbe7f6" textLength="51" lengthAdjust="spacingAndGlyphs">DEFINE YOUR</text>
<text x="111" y="463" font-size="9.500" class="b" style="fill:#fff" textLength="80" lengthAdjust="spacingAndGlyphs">BRAND MESSAGE</text>
<g font-size="3.800" class="b">
<text x="111" y="476" style="fill:#e4ecfa" textLength="101" lengthAdjust="spacingAndGlyphs">When creating your brand strategy for a product or service it</text>
<text x="111" y="481" style="fill:#e4ecfa" textLength="90" lengthAdjust="spacingAndGlyphs">is important to perform a careful analysis to determine</text>
<text x="111" y="486" style="fill:#e4ecfa" textLength="88" lengthAdjust="spacingAndGlyphs">principal barriers that you may come in contact with.</text>
</g>

<!-- thumb3 -->
<rect x="92" y="554" width="216" height="120" fill="#0b2760"/>
<rect x="92" y="554" width="216" height="120" filter="url(#tex)"/>
<g font-size="5">
<text x="136" y="604" style="fill:#dfe6f2" textLength="128" lengthAdjust="spacingAndGlyphs">Customers won't return to you or refer you to someone else,</text>
<text x="154" y="611" style="fill:#dfe6f2" textLength="92" lengthAdjust="spacingAndGlyphs">if you don't deliver on your brand promise.</text>
</g>
<text x="125" y="631" font-size="13.500" class="b" style="fill:#fff" textLength="55" lengthAdjust="spacingAndGlyphs">BE TRUE</text>
<text x="184" y="631" font-size="13" style="fill:#d8e0f0" textLength="91" lengthAdjust="spacingAndGlyphs">TO YOUR BRAND</text>

<!-- thumb4 -->
<rect x="92" y="718" width="99" height="122" fill="url(#gMain)"/><rect x="191" y="718" width="117" height="122" fill="#17366f"/>
<rect x="191" y="746" width="89" height="67" fill="#fff"/>
<text x="106" y="766.500" font-size="7.500" style="fill:#d5e2f4" textLength="33" lengthAdjust="spacingAndGlyphs">CREATE A</text>
<text x="141" y="766.500" font-size="8.500" class="b" style="fill:#fff" textLength="27" lengthAdjust="spacingAndGlyphs">VOICE</text>
<g font-size="3.800" class="b">
<text x="107" y="780" style="fill:#e6eefa" textLength="56" lengthAdjust="spacingAndGlyphs">This voice should be applied to all</text>
<text x="107" y="785" style="fill:#e6eefa" textLength="38" lengthAdjust="spacingAndGlyphs">written communication and</text>
<text x="107" y="790" style="fill:#e6eefa" textLength="66" lengthAdjust="spacingAndGlyphs">incorporated in the visual imagery of all</text>
<text x="107" y="796" style="fill:#e6eefa" textLength="64" lengthAdjust="spacingAndGlyphs">materials, online and off. Is your brand</text>
<text x="107" y="801" style="fill:#e6eefa" textLength="67" lengthAdjust="spacingAndGlyphs">friendly? Be conversational. Is it ritzy? Be</text>
<text x="107" y="807" style="fill:#e6eefa" textLength="21" lengthAdjust="spacingAndGlyphs">more formal.</text>
</g>
<path d="M224 767h11l5 5v15h-16z" fill="#fff" stroke="#b9c4d8" stroke-width=".8"/>
<path d="M229 775l-2 2l2 2M233 775l2 2l-2 2" fill="none" stroke="#7f8ca8" stroke-width=".7"/>
<circle cx="241" cy="787" r="6" fill="#fff" stroke="#b9c4d8"/><circle cx="241" cy="787" r="3" fill="#e97864"/>
<path d="M194 810h40" stroke="#777" stroke-width="1"/><path d="M265 809h8" stroke="#e35d47" stroke-width="1"/>

<!-- thumb5 -->
<rect x="92" y="884" width="216" height="122" fill="#0c2158"/>
<g fill="#1c3671" opacity=".85" filter="url(#bl)">
<path d="M105 955c5-12 18-26 32-30c8 0 12 4 13 9c-5 6-12 10-15 18c-8 8-20 12-30 3z"/>
<path d="M170 918c15-5 40-3 60-4c25-2 50 0 70 6c-8 6-22 8-30 18c-10 8-28 4-40 5c-10 10-22 5-25-4c-12-3-28-5-35-21z"/>
<path d="M260 982c8-6 25-6 30-1c0 8-12 12-22 10c-5-1-9-5-8-9z"/>
</g>
<text x="126" y="905" font-size="8" style="fill:#d5ddee" textLength="66" lengthAdjust="spacingAndGlyphs">FOCUS ON YOUR</text>
<text x="194" y="905" font-size="8" class="b" style="fill:#fff" textLength="81" lengthAdjust="spacingAndGlyphs">TARGET AUDIENCE</text>
<g fill="none" stroke="#37508a" stroke-width="1">
<circle cx="141" cy="936" r="11.500"/><circle cx="208" cy="936" r="11.500"/><circle cx="276" cy="936" r="11.500"/><circle cx="176" cy="969" r="11.500"/><circle cx="242" cy="969" r="11.500"/>
<path d="M129 939H119L116 934M220 934H233V938M264 939H252L250 934M188 970H201V966M254 970H267V966"/>
</g>
<g fill="url(#gCircle)"><circle cx="141" cy="936" r="9"/><circle cx="208" cy="936" r="9"/><circle cx="276" cy="936" r="9"/><circle cx="176" cy="969" r="9"/><circle cx="242" cy="969" r="9"/></g>
<g font-size="7" class="b">
<text x="137" y="938.500" style="fill:#fff">01</text><text x="204" y="938.500" style="fill:#fff">03</text><text x="272" y="938.500" style="fill:#fff">05</text><text x="172" y="971.500" style="fill:#fff">02</text><text x="238" y="971.500" style="fill:#fff">04</text>
</g>

<!-- thumb6 -->
<rect x="92" y="1050" width="99" height="122" fill="url(#gMain)"/>
<clipPath id="t6"><rect x="191" y="1050" width="117" height="122"/></clipPath>
<g clip-path="url(#t6)"><g filter="url(#bl)">
<rect x="189" y="1048" width="121" height="126" fill="#243a76"/>
<path d="M210 1085C222 1070 245 1060 268 1058C285 1057 300 1062 310 1070V1086C292 1082 262 1082 240 1086L215 1094Z" fill="#a63a5e"/>
<path d="M243 1060L278 1058L278 1082L245 1085Z" fill="#8f5f86"/>
<path d="M189 1086L212 1086L218 1096L262 1086L310 1088V1118L262 1120L189 1124Z" fill="#7389bd"/>
<path d="M197 1094h14v12h-14zM224 1098h14v12h-14zM248 1092h20v10h-20zM282 1094h18v10h-18z" fill="#a9bbdc"/>
<path d="M189 1124L310 1118V1174H189Z" fill="#1b2a5e"/>
<path d="M194 1128h40v10h-40zM250 1124h44v12h-44z" fill="#56648f"/>
<path d="M189 1152C220 1138 270 1138 310 1150V1174H189Z" fill="#111d46"/>
<path d="M292 1064v70" stroke="#141c40" stroke-width="2"/><circle cx="292" cy="1070" r="3" fill="#1a2348"/>
</g></g>
<circle cx="114.500" cy="1077" r="3.500" fill="#dfeefa"/>
<path d="M108 1077h13M114.500 1070v14M110 1072l9 10M119 1072l-9 10" stroke="#cfe3f4" stroke-width=".8"/>
<text x="112.500" y="1096" font-size="8.500" style="fill:#d8e5f6" textLength="65" lengthAdjust="spacingAndGlyphs">INTEGRATE YOUR</text>
<text x="112.500" y="1106" font-size="8.500" class="b" style="fill:#fff" textLength="90" lengthAdjust="spacingAndGlyphs">BRAND'S OBJECTIVES</text>
<g font-size="3.800" class="b">
<text x="112" y="1125" style="fill:#e6eefa" textLength="60" lengthAdjust="spacingAndGlyphs">Branding extends to every aspect of</text>
<text x="112" y="1130" style="fill:#e6eefa" textLength="62" lengthAdjust="spacingAndGlyphs">your business - how you answer your</text>
<text x="112" y="1135" style="fill:#e6eefa" textLength="61" lengthAdjust="spacingAndGlyphs">phones, what you or your salespeople</text>
<text x="112" y="1141" style="fill:#e6eefa" textLength="69" lengthAdjust="spacingAndGlyphs">wear on sales calls, your email signature,</text>
<text x="112" y="1146" style="fill:#e6eefa" textLength="19" lengthAdjust="spacingAndGlyphs">everything.</text>
</g>

<!-- thumb7 -->
<rect x="92" y="1216" width="216" height="61" fill="url(#gTop7)"/>
<rect x="92" y="1277" width="216" height="59" fill="#17366f"/>
<text x="150" y="1242" font-size="7.500" style="fill:#d8e5f6" textLength="37" lengthAdjust="spacingAndGlyphs">MAINTAIN</text>
<text x="189" y="1242" font-size="8" class="b" style="fill:#fff" textLength="62" lengthAdjust="spacingAndGlyphs">CONSISTENCY</text>
<g font-size="3.800" class="b">
<text x="127" y="1250.500" style="fill:#e6eefa" textLength="146" lengthAdjust="spacingAndGlyphs">In an effort to give your brand a platform to stand on, you need to be sure that all of your</text>
<text x="127" y="1256" style="fill:#e6eefa" textLength="146" lengthAdjust="spacingAndGlyphs">messaging is cohesive. Ultimately, consistency contributes to brand recognition, which</text>
<text x="181" y="1261" style="fill:#e6eefa" textLength="38" lengthAdjust="spacingAndGlyphs">fuels customer loyalty.</text>
<text x="129" y="1311.500" style="fill:#e6eefa" textLength="142" lengthAdjust="spacingAndGlyphs">Find a way to connect with your customers on a deeper, more emotional level. Do you</text>
<text x="127" y="1316.500" style="fill:#e6eefa" textLength="146" lengthAdjust="spacingAndGlyphs">give them peace of mind? Make them feel like part of the family? Do you make life easier?</text>
<text x="137" y="1322" style="fill:#e6eefa" textLength="126" lengthAdjust="spacingAndGlyphs">Use emotional triggers like these to strengthen your relationship and loyalty.</text>
</g>
<text x="167" y="1302" font-size="7.500" style="fill:#d8e5f6" textLength="17" lengthAdjust="spacingAndGlyphs">ADD</text>
<text x="186" y="1302" font-size="8" class="b" style="fill:#fff" textLength="47" lengthAdjust="spacingAndGlyphs">EMOTIONS</text>
</g>
</svg>
</body>
</html>
